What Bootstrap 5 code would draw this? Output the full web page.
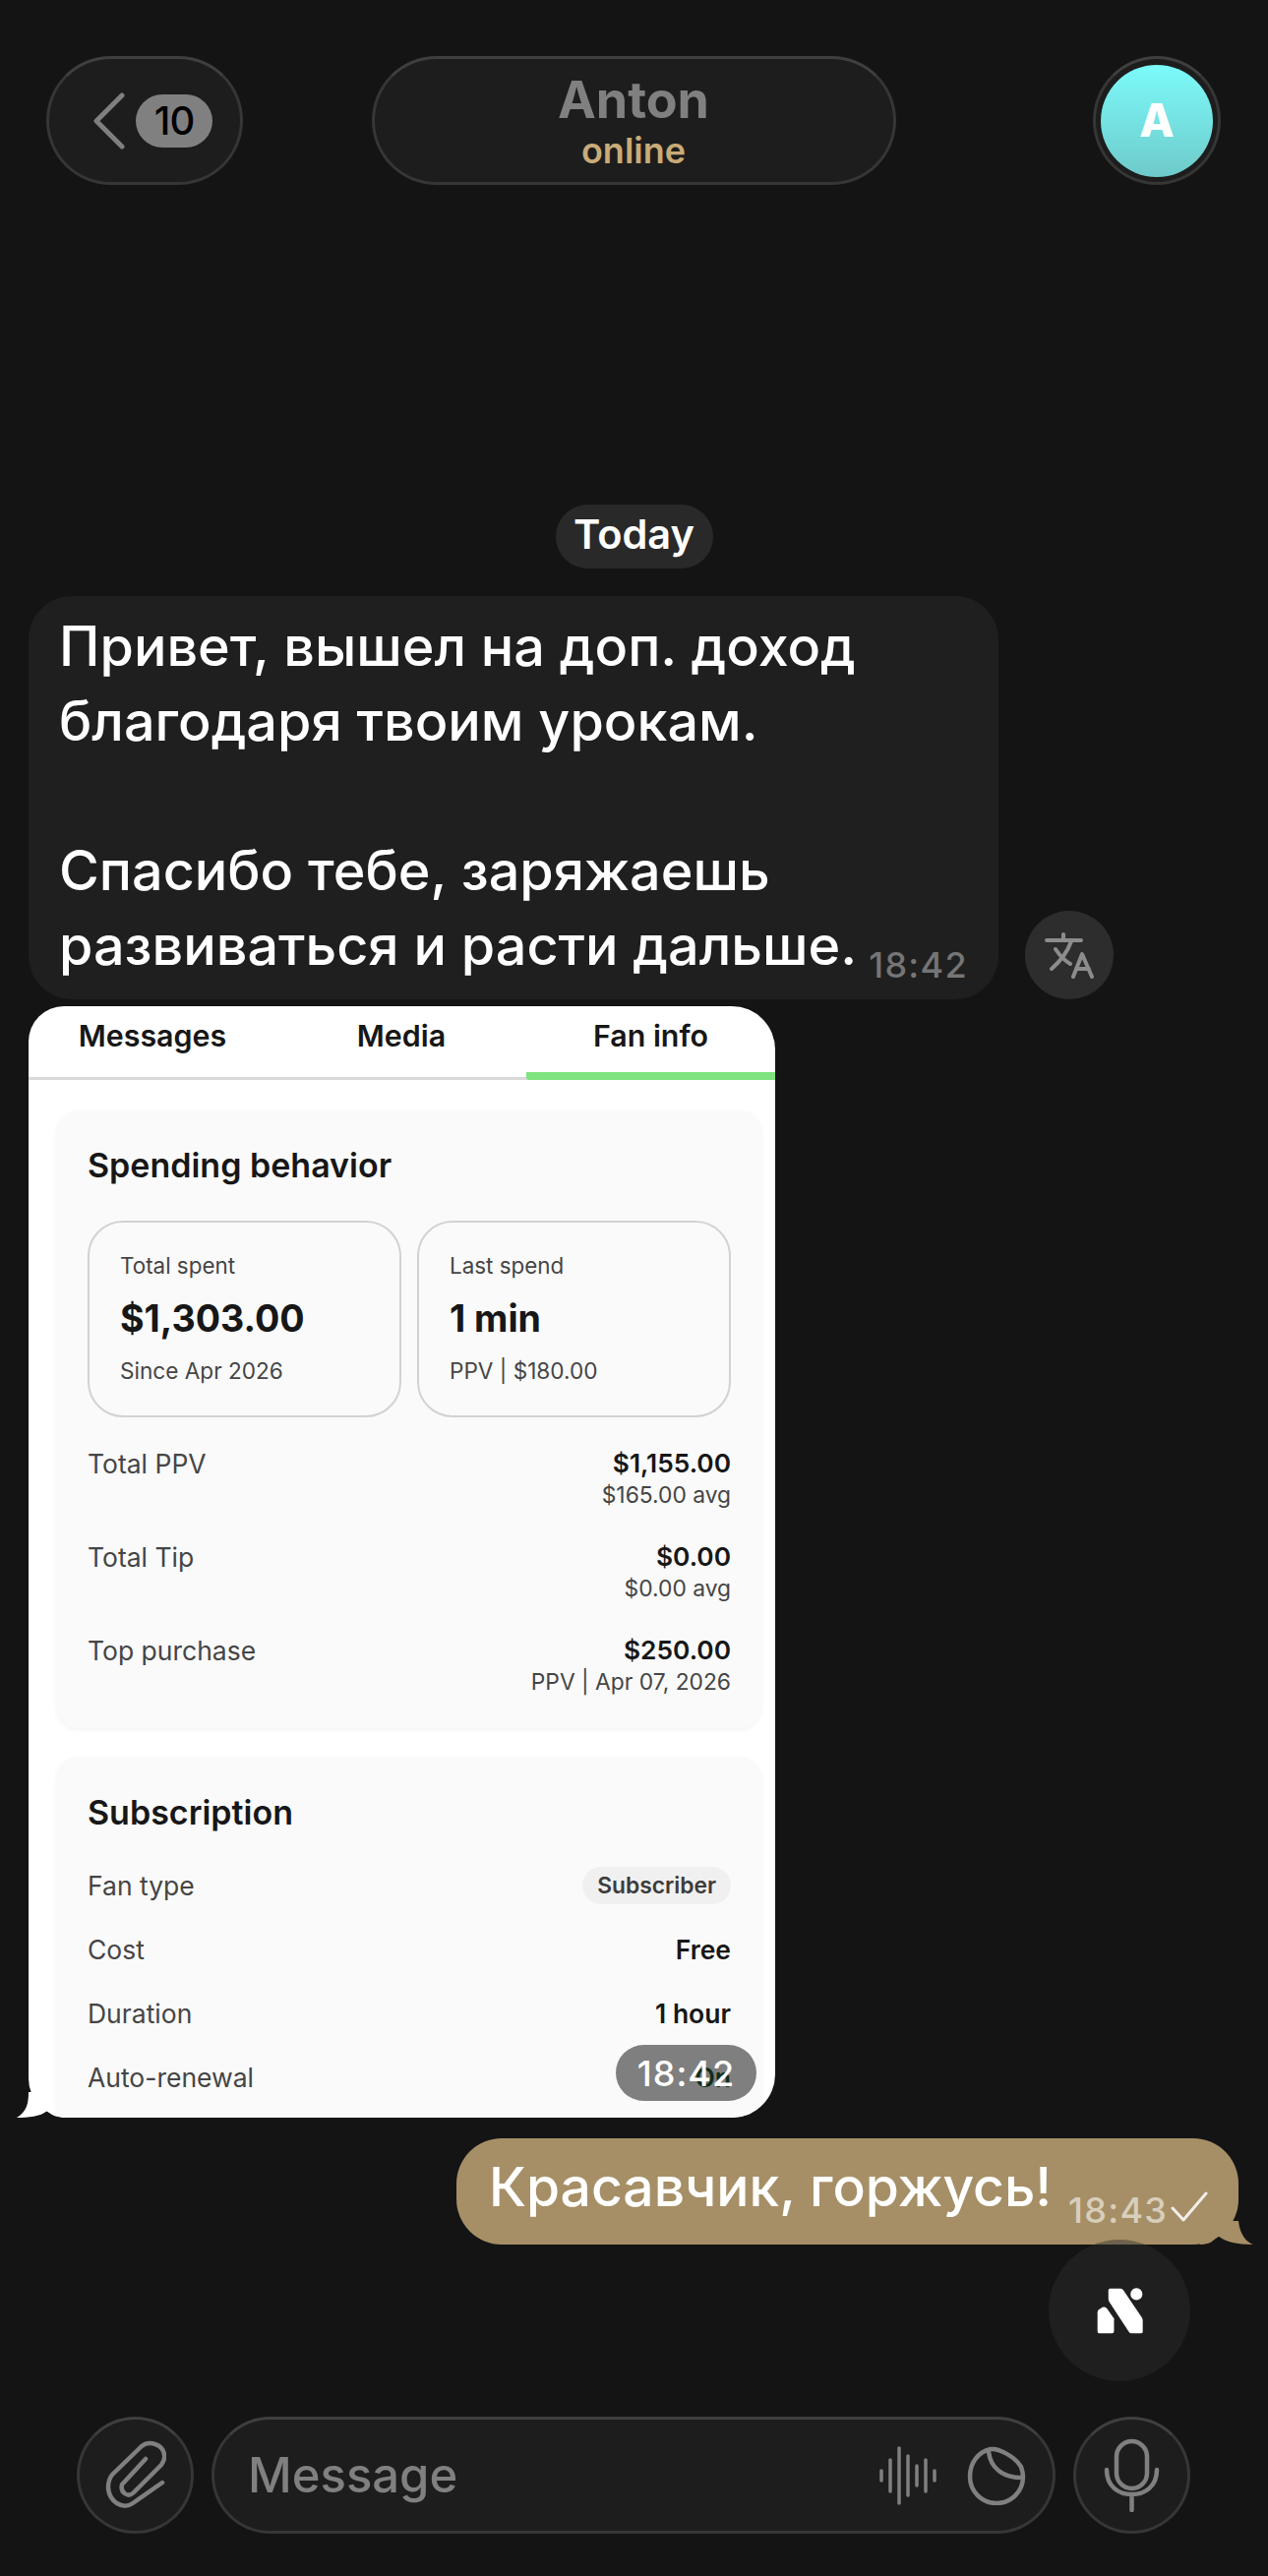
<!DOCTYPE html>
<html lang="ru">
<head>
<meta charset="utf-8">
<title>Anton</title>
<link href="https://cdn.jsdelivr.net/npm/bootstrap@5.3.0/dist/css/bootstrap.min.css" rel="stylesheet">
<style>
html,body{margin:0;background:#141414}
body{font-family:"Inter","Noto Sans",sans-serif;color:#fff}
.screen{height:2619px;width:1289px;overflow:hidden;background:#141414}
/* glass-style controls */
.glass{background:#1d1d1d;border:3px solid #363636;border-top-color:#3f3f3f}
.top-bar{padding:57px 48px 0 47px}
.top-side{flex:1 1 0}
.back-pill{width:200px;height:131px;padding-left:45px;gap:11px}
.chev{width:32px;height:58px}
.count{width:78px;height:54px;background:#808080;color:#000;font-size:40px;font-weight:500;line-height:54px;letter-spacing:-1px}
.title-pill{width:533px;height:131px;padding-top:2px}
.peer{font-size:52px;line-height:54px;font-weight:700;color:#808080}
.status{font-size:36px;line-height:40px;font-weight:600;color:#c9ab78;margin-top:4px}
.avatar-ring{width:130px;height:131px}
.avatar-disc{width:114px;height:114px;background:linear-gradient(#7cfafa,#6fcaca);font-size:46px;font-weight:800;color:#fff}
.thread{padding:0 29px}
.day-chip{width:160px;height:65px;background:#292929;border-radius:33px;font-size:41.5px;line-height:60px;padding-bottom:5px;font-weight:600;margin-top:325px;margin-bottom:28px}
.bubble-in{width:986px;height:410px;background:#1f1f1f;border-radius:44px;padding:13px 0 0 31px;font-size:55.7px;line-height:76px;font-weight:500}
.stamp{font-size:36px;font-weight:500;line-height:44px;color:#757575;letter-spacing:1.3px}
.stamp-in{right:31px;bottom:13px}
.translate-btn{width:90px;height:90px;background:#2d2d2d;margin-left:27px}
.shot-wrap{width:759px;height:1130px;margin-top:7px}
.shot{height:1130px;background:#fff;border-radius:36px 44px 44px 40px;overflow:hidden;color:#1a1a1a}
.tail-in{left:-12px;bottom:0;width:50px;height:26px}
.tabs{height:75px;border-bottom:3px solid #d9d9d9}
.tab-item{font-size:30.4px;font-weight:600;line-height:38px;padding-top:11px;text-align:center;color:#171717}
.tab-a{width:252px}
.tab-b{width:254px}
.tab-c{width:253px;border-bottom:8px solid #7fe37f;height:75px;margin-bottom:-3px;border-radius:0 0 0 3px}
.panel{background:#fafafa;border:0;border-radius:22px;margin:0 14px 0 29px;padding:0 31px;box-shadow:0 2px 6px rgba(0,0,0,.05)}
.panel-a{height:628px;margin-top:31px}
.panel-b{height:420px;margin-top:29px}
.panel-title{font-size:34px;line-height:44px;font-weight:600;color:#171717;margin:0}
.panel-a .panel-title{padding-top:34px}
.panel-b .panel-title{padding-top:35px}
.stat-grid{gap:16px;margin-top:34px}
.stat-box{width:319px;height:200px;border:2px solid #d2d2d2;border-radius:36px;padding:29px 0 0 31px}
.stat-label{font-size:22.4px;line-height:30px;color:#454545}
.stat-value{font-size:37.6px;line-height:50px;font-weight:700;color:#171717;margin-top:14px}
.stat-sub{font-size:22.6px;line-height:30px;color:#454545;margin-top:13px}
.rows{margin-top:28px}
.line-item{height:95px;font-size:26.5px;line-height:38px;color:#454545}
.line-item b{display:block;font-weight:600;color:#171717;font-size:26.3px;line-height:38px}
.line-item small{display:block;font-size:22.8px;line-height:26px;color:#454545;margin-top:0}
.sub-list{margin-top:32px;gap:25px}
.sub-item{font-size:26.5px;color:#454545;line-height:40px}
.sub-item b{font-weight:600;color:#171717}
.tag{background:#f0f0f0;color:#3c3c3c;font-size:22.8px;font-weight:600;line-height:38px;padding:0 15px;border-radius:19px}
.sub-item .on-text{color:#1d5a3c}
.time-chip{right:19px;bottom:17px;width:143px;height:57px;background:rgba(0,0,0,.49);border-radius:29px;font-size:36px;font-weight:500;letter-spacing:1px;color:#fff}
.out-wrap{margin-top:21px;padding-right:1px}
.bubble-out{width:795px;height:108px;background:#a68f66;border-radius:46px;font-size:55.2px;font-weight:500;padding-left:33px;line-height:98px}
.stamp-out{left:622px;bottom:13px;color:rgba(255,255,255,.58)}
.check{left:726px;top:53px;width:38px;height:34px}
.tail-out{right:-15px;bottom:0;width:54px;height:24px}
.magic-btn{width:144px;height:144px;right:79px;top:2277px;background:rgba(44,44,44,.45);z-index:2}
.composer{padding:0 78px 43px 78px;gap:18px}
.round-btn{width:119px;height:119px;flex:none}
.field{height:119px;width:858px;padding-left:34px;padding-right:27px;font-size:49px;font-weight:500;color:#808080}
.field-icons{gap:30px}
</style>
</head>
<body>
<div class="screen d-flex flex-column position-relative">

  <!-- header -->
  <div class="top-bar d-flex align-items-start">
    <div class="top-side d-flex">
      <div class="glass back-pill rounded-pill d-flex align-items-center">
        <svg class="chev" viewBox="0 0 32 58" fill="none" stroke="#7f7f7f" stroke-width="5" stroke-linecap="round" stroke-linejoin="round"><path d="M29 3 L3 29 L29 55"/></svg>
        <span class="count rounded-pill text-center">10</span>
      </div>
    </div>
    <div class="glass title-pill rounded-pill d-flex flex-column align-items-center justify-content-center">
      <div class="peer">Anton</div>
      <div class="status">online</div>
    </div>
    <div class="top-side d-flex justify-content-end">
      <div class="glass avatar-ring rounded-circle d-flex align-items-center justify-content-center">
        <div class="avatar-disc rounded-circle flex-none d-flex align-items-center justify-content-center">A</div>
      </div>
    </div>
  </div>

  <!-- conversation -->
  <div class="thread">
    <div class="day-chip mx-auto d-flex align-items-center justify-content-center">Today</div>

    <div class="d-flex align-items-end">
      <div class="bubble-in position-relative">
        Привет, вышел на доп. доход<br>благодаря твоим урокам.<br><br>Спасибо тебе, заряжаешь<br>развиваться и расти дальше.
        <span class="stamp stamp-in position-absolute">18:42</span>
      </div>
      <div class="translate-btn rounded-circle d-flex align-items-center justify-content-center">
        <svg width="51" height="47" viewBox="0 0 51 47" fill="none" stroke="#8c8c8c" stroke-width="4" stroke-linecap="round" stroke-linejoin="round"><path d="M2 8 H37 M19 2 V8 M27 9 C23 20 15 30 7 37 M11 17 C15 23 21 29 26 32 M29 45 L38 22 L48 45 M32 37 H45"/></svg>
      </div>
    </div>

    <!-- forwarded profile screen -->
    <div class="shot-wrap position-relative">
      <svg class="tail-in position-absolute" viewBox="0 0 50 26"><path d="M12 0 C12 12 10 20 0 26 C12 26 24 25 31 19 C36 24 42 26 50 26 L50 0 Z" fill="#fff"/></svg>
      <div class="shot position-relative">
        <div class="tabs d-flex">
          <div class="tab-item tab-a">Messages</div>
          <div class="tab-item tab-b">Media</div>
          <div class="tab-item tab-c">Fan info</div>
        </div>

        <div class="card panel panel-a">
          <h3 class="panel-title">Spending behavior</h3>
          <div class="d-flex stat-grid">
            <div class="stat-box">
              <div class="stat-label">Total spent</div>
              <div class="stat-value">$1,303.00</div>
              <div class="stat-sub">Since Apr 2026</div>
            </div>
            <div class="stat-box">
              <div class="stat-label">Last spend</div>
              <div class="stat-value">1 min</div>
              <div class="stat-sub">PPV | $180.00</div>
            </div>
          </div>
          <div class="rows">
            <div class="line-item d-flex justify-content-between">
              <span>Total PPV</span>
              <span class="text-end"><b>$1,155.00</b><small>$165.00 avg</small></span>
            </div>
            <div class="line-item d-flex justify-content-between">
              <span>Total Tip</span>
              <span class="text-end"><b>$0.00</b><small>$0.00 avg</small></span>
            </div>
            <div class="line-item d-flex justify-content-between">
              <span>Top purchase</span>
              <span class="text-end"><b>$250.00</b><small>PPV | Apr 07, 2026</small></span>
            </div>
          </div>
        </div>

        <div class="card panel panel-b">
          <h3 class="panel-title">Subscription</h3>
          <div class="d-flex flex-column sub-list">
            <div class="sub-item d-flex justify-content-between align-items-center"><span>Fan type</span><span class="tag">Subscriber</span></div>
            <div class="sub-item d-flex justify-content-between align-items-center"><span>Cost</span><b>Free</b></div>
            <div class="sub-item d-flex justify-content-between align-items-center"><span>Duration</span><b>1 hour</b></div>
            <div class="sub-item d-flex justify-content-between align-items-center"><span>Auto-renewal</span><b class="on-text">On</b></div>
          </div>
        </div>

        <div class="time-chip position-absolute d-flex align-items-center justify-content-center">18:42</div>
      </div>
    </div>

    <!-- own reply -->
    <div class="out-wrap d-flex justify-content-end">
      <div class="bubble-out position-relative">
        Красавчик, горжусь!
        <span class="stamp stamp-out position-absolute">18:43</span>
        <svg class="check position-absolute" viewBox="0 0 38 34" fill="none" stroke="#fff" stroke-opacity=".85" stroke-width="3" stroke-linecap="round" stroke-linejoin="round"><path d="M2 18 L13 30 L36 3"/></svg>
        <svg class="tail-out position-absolute" viewBox="0 0 54 24"><path d="M0 24 C10 24 14 20 18 15 C26 22 40 24 54 24 C44 20 40 10 39 0 L0 0 Z" fill="#a68f66"/></svg>
      </div>
    </div>
  </div>

  <!-- assistant shortcut floating above the thread -->
  <div class="magic-btn rounded-circle position-absolute d-flex align-items-center justify-content-center">
    <svg width="47" height="47" viewBox="200 197 140 140" fill="#fff"><path d="M207 335 Q202 335 202 328 V272 Q202 266 206 263 L217 256 Q226 253 231 260 L252 290 V328 Q252 335 246 335 Z"/><path d="M240 199 H272 Q277 199 280 204 L335 285 Q339 290 339 296 V330 Q339 335 333 335 H305 Q300 335 297 330 L238 240 Q235 236 235 230 V204 Q235 199 240 199 Z"/><circle cx="320" cy="216" r="18"/></svg>
  </div>

  <!-- message composer -->
  <div class="composer mt-auto d-flex align-items-center">
    <div class="glass round-btn rounded-circle d-flex align-items-center justify-content-center">
      <svg width="62" height="72" viewBox="0 0 62 72" fill="none" stroke="#808080" stroke-width="4.5" stroke-linecap="round" stroke-linejoin="round"><path d="M58 43 L28 64 C18 71 4 63 3 48 C3 43 4 39 7 35 L37 6 C45 0 59 4 60 15 C61 19 59 22 57 25 L29 53 C23 59 15 53 17 45 L41 19"/></svg>
    </div>
    <div class="glass field rounded-pill d-flex align-items-center justify-content-between">
      <span>Message</span>
      <div class="field-icons d-flex align-items-center">
        <svg width="60" height="60" viewBox="0 0 60 60" fill="none" stroke="#808080" stroke-width="3.5" stroke-linecap="round"><path d="M3 25 V35 M12 14 V46 M21 2 V58 M30 10 V50 M39 20 V40 M48 14 V46 M57 25 V35"/></svg>
        <svg width="60" height="60" viewBox="0 0 60 60" fill="none" stroke="#808080" stroke-width="4.5" stroke-linecap="round" stroke-linejoin="round"><path d="M24 3 C11 6 3 17 3 31 C3 46 15 58 30 58 C45 58 57 46 57 31 C57 27 56 24 55 21 C50 13 39 5 28 3 Z"/><path d="M22 6 C24 21 35 32 56 32"/></svg>
      </div>
    </div>
    <div class="glass round-btn rounded-circle d-flex align-items-center justify-content-center">
      <svg width="57" height="75" viewBox="0 0 57 75" fill="none" stroke="#808080" stroke-width="4.5" stroke-linecap="round"><rect x="13" y="3" width="31" height="48" rx="15.5"/><path d="M3 32 C3 49 15 57 28.5 57 C42 57 54 49 54 32 M28.5 57 V73"/></svg>
    </div>
  </div>
</div>
<script src="https://cdn.jsdelivr.net/npm/bootstrap@5.3.0/dist/js/bootstrap.bundle.min.js"></script>
</body>
</html>
